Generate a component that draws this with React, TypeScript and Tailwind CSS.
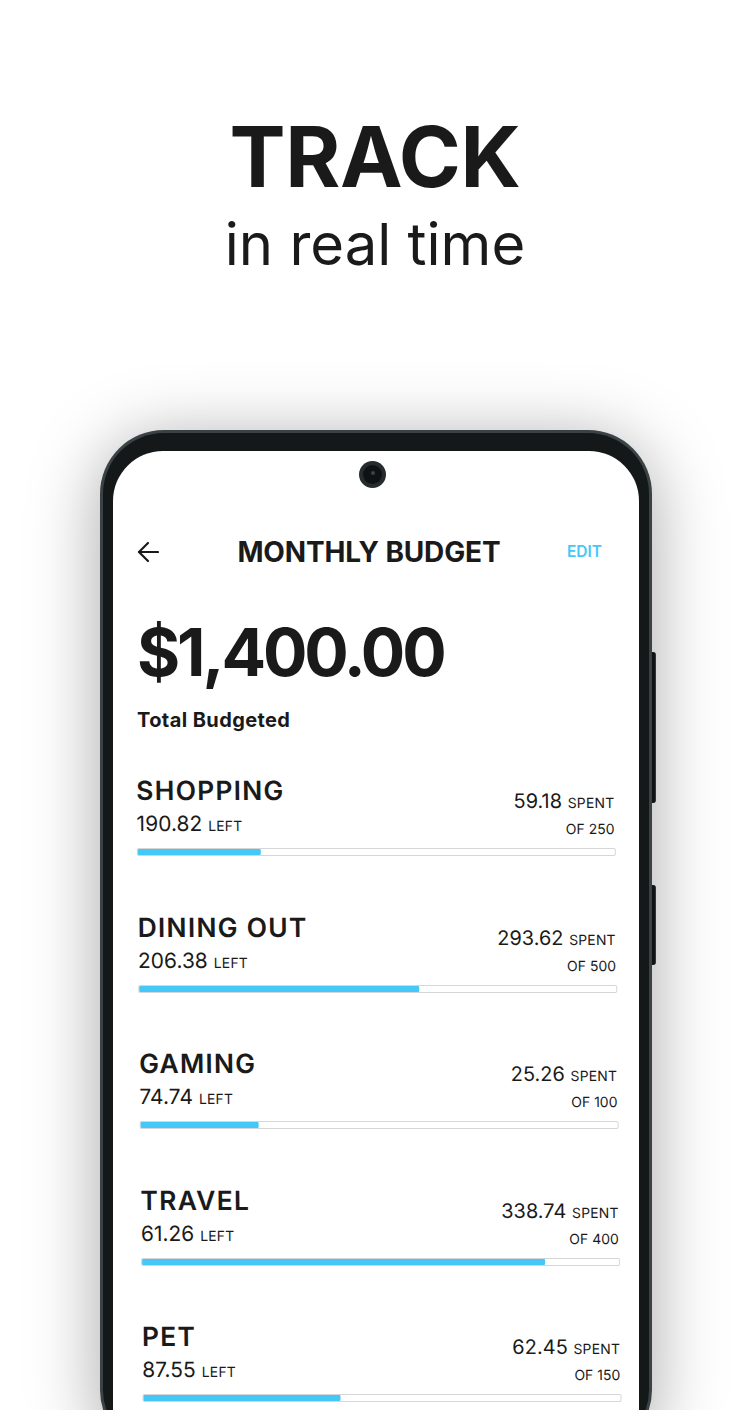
import { ReactNode } from "react";

type Category = {
  name: string;
  left: string;
  spent: string;
  total: number;
  pct: number;
};

const categories: Category[] = [
  { name: "SHOPPING", left: "190.82", spent: "59.18", total: 250, pct: 26 },
  { name: "DINING OUT", left: "206.38", spent: "293.62", total: 500, pct: 58.9 },
  { name: "GAMING", left: "74.74", spent: "25.26", total: 100, pct: 25 },
  { name: "TRAVEL", left: "61.26", spent: "338.74", total: 400, pct: 84.6 },
  { name: "PET", left: "87.55", spent: "62.45", total: 150, pct: 41.6 },
];

const Small = ({ children }: { children: ReactNode }) => (
  <span className="text-[14px] font-normal tracking-[0.01em]">{children}</span>
);

const BudgetRow = ({ item }: { item: Category }) => (
  <div className="flex flex-col">
    <div className="flex items-end justify-between">
      <div className="flex flex-col">
        <div className="text-[26.5px] leading-[32px] font-semibold tracking-[0.045em]">{item.name}</div>
        <div className="mt-[5px] text-[21px] leading-[26px] font-normal">
          {item.left} <Small>LEFT</Small>
        </div>
      </div>
      <div className="flex flex-col items-end pr-px">
        <div className="text-[20px] leading-[24px] font-normal">
          {item.spent} <Small>SPENT</Small>
        </div>
        <div className="mt-[4px] text-[14px] leading-[20px]">OF {item.total}</div>
      </div>
    </div>
    <div className="mt-[9px] h-[8px] rounded-[2px] border border-[#d6d6d6] bg-white overflow-hidden">
      <div
        className="h-full rounded-[3px] bg-[#45c8f7] -mt-px -ml-px"
        style={{ width: `${item.pct}%`, height: "8px" }}
      />
    </div>
  </div>
);

const App = () => {
  return (
    <div
      className="w-[750px] h-[1410px] overflow-hidden bg-white text-[#1a1a1a]"
      style={{ fontFamily: "Inter, 'Noto Sans', sans-serif" }}
    >
      {/* Headline */}
      <div className="pt-[115px] flex flex-col items-center">
        <h1 className="text-[84px] leading-none font-bold tracking-[-0.005em]">TRACK</h1>
        <p className="mt-[16px] text-[58px] leading-none font-normal">in real time</p>
      </div>

      {/* Phone */}
      <div className="relative mt-[157px] ml-[100px] w-[552px]">
        <div className="absolute left-[550px] top-[222px] w-[6px] h-[151px] rounded-r-[3px] bg-[#141819] border-r border-[#3a4245]" />
        <div className="absolute left-[550px] top-[455px] w-[6px] h-[80px] rounded-r-[3px] bg-[#141819] border-r border-[#3a4245]" />
        <div className="relative rounded-[64px] bg-[#3a4245] p-[3px] shadow-[0_10px_70px_rgba(0,0,0,0.35)]">
          <div className="rounded-[61px] bg-[#141819] pt-[18px] px-[10px]">
            <div className="h-[1000px] rounded-t-[50px] bg-white px-[24px]">
              {/* Camera */}
              <div className="flex justify-center pt-[10px] pr-[7px]">
                <div className="w-[27px] h-[27px] rounded-full bg-[#262b2d] flex items-center justify-center">
                  <div className="w-[19px] h-[19px] rounded-full bg-[#0f1213] flex items-center justify-center">
                    <div className="w-[4px] h-[4px] rounded-full bg-[#3b4347] -mt-[3px]" />
                  </div>
                </div>
              </div>

              {/* Header */}
              <div className="mt-[48px] h-[32px] flex items-center">
                <svg width="22" height="22" viewBox="0 0 22 22" fill="none" stroke="#1a1a1a" strokeWidth="2.2" strokeLinecap="round" strokeLinejoin="round">
                  <path d="M21 11H2" />
                  <path d="M11 2 2 11l9 9" />
                </svg>
                <div className="flex-1 pl-[12px] text-center text-[28px] leading-[32px] font-bold tracking-[-0.005em]">
                  MONTHLY BUDGET
                </div>
                <div className="mr-[13px] text-[15.5px] font-semibold text-[#45c8f7]">EDIT</div>
              </div>

              {/* Total */}
              <div className="mt-[51px] text-[66px] leading-none font-bold tracking-[-0.047em]">
                $1,400.00
              </div>
              <div className="mt-[23px] text-[20px] leading-[24px] font-bold tracking-[0.02em]">
                Total Budgeted
              </div>

              {/* Categories */}
              <div className="mt-[42px] -ml-px flex flex-col gap-[54.5px] origin-top-left skew-x-[0.6deg]">
                {categories.map((c) => (
                  <BudgetRow key={c.name} item={c} />
                ))}
              </div>
            </div>
          </div>
        </div>
      </div>
    </div>
  );
};

export default App;
